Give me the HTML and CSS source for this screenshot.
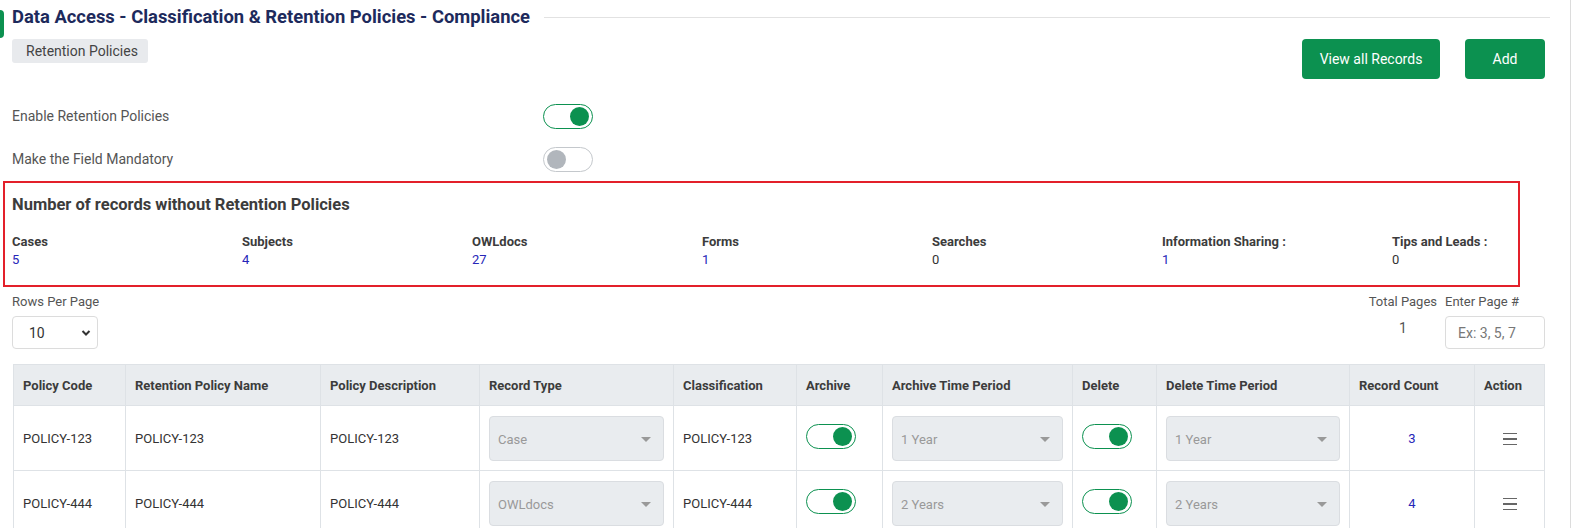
FILE: index.html
```html
<!DOCTYPE html>
<html lang="en">
  <head>
    <meta charset="UTF-8" />
    <meta name="viewport" content="width=device-width, initial-scale=1.0" />
    <title>Retention Policies</title>
    <link rel="stylesheet" href="styles.css">
  </head>
  <body>
    <div class="page">
      <span class="side-tab"></span>

      <div class="title-row">
        <h1>Data Access - Classification &amp; Retention Policies - Compliance</h1>
        <span class="rule"></span>
      </div>

      <div class="toolbar">
        <span class="chip">Retention Policies</span>
        <div class="actions">
          <button class="btn">View all Records</button>
          <button class="btn btn-small">Add</button>
        </div>
      </div>

      <div class="setting first">
        <span class="setting-label">Enable Retention Policies</span>
        <span class="switch on"></span>
      </div>
      <div class="setting">
        <span class="setting-label">Make the Field Mandatory</span>
        <span class="switch"></span>
      </div>

      <div class="summary">
        <h2>Number of records without Retention Policies</h2>
        <div class="counts">
          <div class="count"><b>Cases</b><span class="link">5</span></div>
          <div class="count"><b>Subjects</b><span class="link">4</span></div>
          <div class="count"><b>OWLdocs</b><span class="link">27</span></div>
          <div class="count"><b>Forms</b><span class="link">1</span></div>
          <div class="count"><b>Searches</b><span>0</span></div>
          <div class="count"><b>Information Sharing :</b><span class="link">1</span></div>
          <div class="count"><b>Tips and Leads :</b><span>0</span></div>
        </div>
      </div>

      <div class="pager">
        <div class="field">
          <label>Rows Per Page</label>
          <div class="rows-select">
            <span>10</span>
            <svg width="10" height="8" viewBox="0 0 10 8"><polyline points="1.5,2 5,5.5 8.5,2" fill="none" stroke="#333" stroke-width="2"/></svg>
          </div>
        </div>
        <div class="pager-right">
          <div class="field total">
            <label>Total Pages</label>
            <span class="total-num">1</span>
          </div>
          <div class="field">
            <label>Enter Page #</label>
            <input class="page-input" type="text" placeholder="Ex: 3, 5, 7">
          </div>
        </div>
      </div>

      <table class="policies">
        <thead>
          <tr>
            <th class="c-code">Policy Code</th>
            <th class="c-name">Retention Policy Name</th>
            <th class="c-desc">Policy Description</th>
            <th class="c-type">Record Type</th>
            <th class="c-class">Classification</th>
            <th class="c-arch">Archive</th>
            <th class="c-aperiod">Archive Time Period</th>
            <th class="c-del">Delete</th>
            <th class="c-dperiod">Delete Time Period</th>
            <th class="c-count">Record Count</th>
            <th>Action</th>
          </tr>
        </thead>
        <tbody>
          <tr>
            <td>POLICY-123</td>
            <td>POLICY-123</td>
            <td>POLICY-123</td>
            <td><div class="dropdown">Case</div></td>
            <td>POLICY-123</td>
            <td><span class="switch on"></span></td>
            <td><div class="dropdown">1 Year</div></td>
            <td><span class="switch on"></span></td>
            <td><div class="dropdown">1 Year</div></td>
            <td class="center"><span class="link">3</span></td>
            <td class="center"><span class="menu"><i></i><i></i><i></i></span></td>
          </tr>
          <tr>
            <td>POLICY-444</td>
            <td>POLICY-444</td>
            <td>POLICY-444</td>
            <td><div class="dropdown">OWLdocs</div></td>
            <td>POLICY-444</td>
            <td><span class="switch on"></span></td>
            <td><div class="dropdown">2 Years</div></td>
            <td><span class="switch on"></span></td>
            <td><div class="dropdown">2 Years</div></td>
            <td class="center"><span class="link">4</span></td>
            <td class="center"><span class="menu"><i></i><i></i><i></i></span></td>
          </tr>
        </tbody>
      </table>
    </div>
  </body>
</html>
```

FILE: styles.css
```css
* {
  margin: 0;
  padding: 0;
  box-sizing: border-box;
}

body {
  font-family: Roboto, "Liberation Sans", sans-serif;
  font-size: 13px;
  color: #333;
  background-color: #fff;
  overflow: hidden;
}

.page {
  position: relative;
  width: 1571px;
  height: 528px;
  padding: 0 25px 0 12px;
  border-right: 1px solid #dcdcdc;
}

.side-tab {
  position: absolute;
  left: 0;
  top: 10px;
  width: 4px;
  height: 28px;
  background-color: #0c9150;
  border-radius: 0 4px 4px 0;
}

.title-row {
  display: flex;
  align-items: center;
  height: 32px;
}

h1 {
  font-size: 18.4px;
  font-weight: 700;
  color: #1d2a5c;
  white-space: nowrap;
}

.rule {
  flex: 1;
  height: 1px;
  margin: 3px -5px 0 14px;
  background-color: #e2e2e2;
}

.toolbar {
  display: flex;
  justify-content: space-between;
  align-items: flex-start;
  margin-top: 7px;
}

.chip {
  display: inline-block;
  height: 24px;
  line-height: 24px;
  padding: 0 10px 0 14px;
  font-size: 14px;
  color: #444;
  background-color: #e8eaed;
  border-radius: 3px;
}

.actions {
  display: flex;
  gap: 25px;
}

.btn {
  height: 40px;
  width: 138px;
  font-family: inherit;
  font-size: 14px;
  color: #fff;
  background-color: #0c9150;
  border: none;
  border-radius: 4px;
}

.btn-small {
  width: 80px;
}

.setting {
  display: flex;
  align-items: center;
  height: 24px;
  margin-top: 19px;
}

.setting.first {
  margin-top: 25px;
}

.setting-label {
  width: 531px;
  font-size: 14px;
  color: #555;
}

.switch {
  position: relative;
  display: inline-block;
  width: 50px;
  height: 25px;
  border: 1px solid #c4c8cc;
  border-radius: 13px;
  background-color: #fff;
}

.switch::after {
  content: "";
  position: absolute;
  top: 2px;
  left: 3px;
  width: 19px;
  height: 19px;
  border-radius: 50%;
  background-color: #b1b6bc;
}

.switch.on {
  border-color: #0c9150;
}

.switch.on::after {
  left: auto;
  right: 3px;
  background-color: #0c9150;
}

.summary {
  margin: 10px 0 0 -9px;
  width: 1517px;
  height: 106px;
  padding: 12px 7px 0;
  border: 2px solid #e3202a;
}

.summary h2 {
  font-size: 16.5px;
  font-weight: 700;
  color: #3c3c3c;
}

.counts {
  display: grid;
  grid-template-columns: repeat(6, 230px) 1fr;
  margin-top: 20px;
}

.count b {
  display: block;
  font-size: 13px;
  color: #3c3c3c;
}

.count span {
  display: block;
  margin-top: 3px;
  font-size: 13px;
}

.link {
  color: #2626b8;
}

.pager {
  display: flex;
  justify-content: space-between;
  margin-top: 7px;
}

.field {
  display: flex;
  flex-direction: column;
}

.field label {
  font-size: 13px;
  color: #555;
  line-height: 16px;
  margin-bottom: 6px;
}

.rows-select {
  display: flex;
  align-items: center;
  justify-content: space-between;
  width: 86px;
  height: 33px;
  padding: 0 6px 0 16px;
  font-size: 14px;
  border: 1px solid #dcdcdc;
  border-radius: 4px;
}

.pager-right {
  display: flex;
  gap: 8px;
}

.total {
  align-items: center;
}

.total-num {
  margin-top: 4px;
  font-size: 14px;
  color: #555;
}

.page-input {
  width: 100px;
  height: 33px;
  padding: 0 12px;
  font-family: inherit;
  font-size: 14px;
  border: 1px solid #dcdcdc;
  border-radius: 4px;
}

.page-input::placeholder {
  color: #777;
}

.policies {
  margin: 15px 0 0 1px;
  width: 1532px;
  border-collapse: collapse;
  table-layout: fixed;
}

.c-code { width: 112px; }
.c-name { width: 195px; }
.c-desc { width: 159px; }
.c-type { width: 194px; }
.c-class { width: 123px; }
.c-arch { width: 86px; }
.c-aperiod { width: 190px; }
.c-del { width: 84px; }
.c-dperiod { width: 193px; }
.c-count { width: 125px; }

.policies th,
.policies td {
  border: 1px solid #dee2e6;
  padding: 0 9px;
  text-align: left;
  font-size: 13px;
}

.policies th {
  height: 41px;
  background-color: #e9ecef;
  font-weight: 700;
  color: #3c3c3c;
}

.policies td {
  height: 65px;
  color: #333;
}

.policies td.center {
  text-align: center;
}

.dropdown {
  position: relative;
  height: 45px;
  line-height: 45px;
  padding: 0 8px;
  color: #999;
  background-color: #e9ecef;
  border: 1px solid #dadde1;
  border-radius: 4px;
}

.dropdown::after {
  content: "";
  position: absolute;
  right: 12px;
  top: 20px;
  border-left: 5px solid transparent;
  border-right: 5px solid transparent;
  border-top: 5px solid #999;
}

.menu {
  display: inline-flex;
  flex-direction: column;
  gap: 4px;
  vertical-align: middle;
}

.menu i {
  display: block;
  width: 14px;
  height: 1.5px;
  background-color: #666;
}
```
